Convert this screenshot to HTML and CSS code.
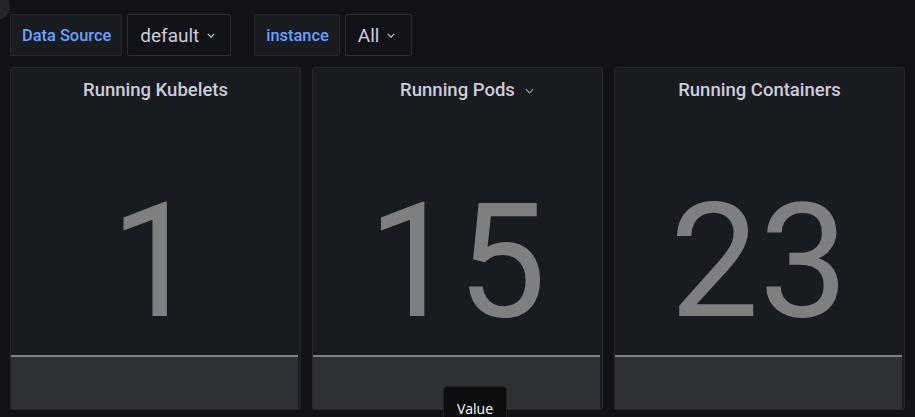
FILE: index.html
```html
<!DOCTYPE html>
<html>
<head>
<meta charset="utf-8">
<link rel="stylesheet" href="styles.css">
</head>
<body>
<div class="app">
  <div class="corner"></div>
  <div class="vars">
    <div class="var">
      <span class="var-label">Data Source</span>
      <span class="var-value">default <svg class="chev" viewBox="0 0 10 6"><path d="M1 1l4 4 4-4" fill="none" stroke="currentColor" stroke-width="1.4"/></svg></span>
    </div>
    <div class="var">
      <span class="var-label">instance</span>
      <span class="var-value var-value-wide">All <svg class="chev" viewBox="0 0 10 6"><path d="M1 1l4 4 4-4" fill="none" stroke="currentColor" stroke-width="1.4"/></svg></span>
    </div>
  </div>
  <div class="panels">
    <div class="panel">
      <div class="panel-header"><span class="panel-title">Running Kubelets</span></div>
      <div class="panel-body">
        <div class="spark"></div>
        <div class="stat">1</div>
      </div>
    </div>
    <div class="panel">
      <div class="panel-header"><span class="panel-title">Running Pods</span><svg class="chev title-chev" viewBox="0 0 10 6"><path d="M1 1l4 4 4-4" fill="none" stroke="currentColor" stroke-width="1.3"/></svg></div>
      <div class="panel-body">
        <div class="spark"></div>
        <div class="stat">15</div>
      </div>
    </div>
    <div class="panel">
      <div class="panel-header"><span class="panel-title">Running Containers</span></div>
      <div class="panel-body">
        <div class="spark"></div>
        <div class="stat">23</div>
      </div>
    </div>
  </div>
  <div class="tooltip">Value</div>
</div>
</body>
</html>
```

FILE: styles.css
```css
html, body {
  margin: 0;
  padding: 0;
  background: #111217;
  height: 100%;
  overflow: hidden;
}
.app {
  position: relative;
  width: 915px;
  height: 417px;
  font-family: Roboto, "Liberation Sans", sans-serif;
  color: #ccccdc;
}
.corner {
  position: absolute;
  left: -16px;
  top: -6px;
  width: 26px;
  height: 26px;
  border-radius: 50%;
  background: #22252b;
}
.vars {
  display: flex;
  gap: 23px;
  padding: 14px 0 0 10px;
  height: 42px;
}
.var {
  display: flex;
  gap: 5px;
}
.var-label {
  display: flex;
  align-items: center;
  padding: 0 10px 0 11px;
  background: #181b1f;
  border: 1px solid #24272e;
  border-radius: 2px;
  color: #6e9fff;
  font-size: 16.4px;
  font-weight: 500;
}
.var-value {
  display: flex;
  align-items: center;
  gap: 8px;
  padding: 0 15px 0 12px;
  background: #111217;
  border: 1px solid #2a2d33;
  border-radius: 2px;
  color: #ccccdc;
  font-size: 19px;
}
.var-value-wide {
  padding-right: 16px;
}
.chev {
  width: 8px;
  height: 5px;
  margin-top: 1px;
}
.panels {
  display: flex;
  gap: 11px;
  padding: 11px 10px 0 10px;
}
.panel {
  width: 291px;
  height: 343px;
  box-sizing: border-box;
  background: #181b1f;
  border: 1px solid #24272e;
  border-radius: 3px;
  display: flex;
  flex-direction: column;
}
.panel-header {
  height: 44px;
  display: flex;
  align-items: center;
  justify-content: center;
  gap: 10px;
}
.panel-title {
  font-size: 18.5px;
  font-weight: 500;
  color: #ccccdc;
}
.title-chev {
  width: 9px;
  height: 6px;
  color: #a0a2ad;
  margin-top: 1px;
  margin-right: -19px;
}
.panel-body {
  flex: 1;
  position: relative;
  display: flex;
  align-items: center;
  justify-content: center;
  padding: 0 1px 1px 0;
}
.spark {
  position: absolute;
  left: 0;
  right: 2px;
  bottom: 0;
  height: 52px;
  background: #2e3134;
  border-top: 2px solid #7e7f82;
}
.stat {
  position: relative;
  font-size: 159px;
  line-height: 1;
  color: #7f7f7f;
  margin-top: 2px;
}
.tooltip {
  position: absolute;
  left: 443px;
  top: 386px;
  width: 64px;
  height: 40px;
  box-sizing: border-box;
  background: #0b0c0e;
  border: 1px solid #202226;
  border-radius: 4px;
  color: #ffffff;
  font-family: "Open Sans", "DejaVu Sans", sans-serif;
  font-size: 14px;
  text-align: center;
  padding-top: 12px;
}
```
